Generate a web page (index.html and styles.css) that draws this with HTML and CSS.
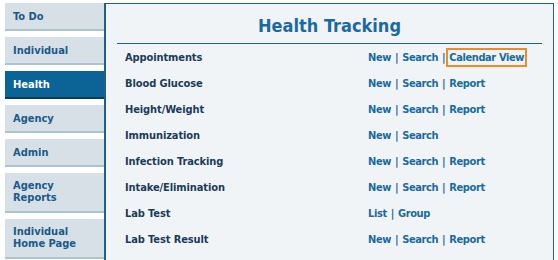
FILE: index.html
```html
<!DOCTYPE html>
<html>
<head>
<meta charset="utf-8">
<link rel="stylesheet" href="styles.css">
</head>
<body>
<div class="page">
  <nav class="sidebar">
    <a class="tab">To Do</a>
    <a class="tab">Individual</a>
    <a class="tab active">Health</a>
    <a class="tab">Agency</a>
    <a class="tab">Admin</a>
    <a class="tab two">Agency<br>Reports</a>
    <a class="tab two">Individual<br>Home Page</a>
  </nav>
  <main class="panel">
    <h1 class="title">Health Tracking</h1>
    <div class="rows">
      <div class="row"><span class="label">Appointments</span><span class="links"><a>New</a><i>|</i><a>Search</a><i>|</i><a class="hl">Calendar View</a></span></div>
      <div class="row"><span class="label">Blood Glucose</span><span class="links"><a>New</a><i>|</i><a>Search</a><i>|</i><a>Report</a></span></div>
      <div class="row"><span class="label">Height/Weight</span><span class="links"><a>New</a><i>|</i><a>Search</a><i>|</i><a>Report</a></span></div>
      <div class="row"><span class="label">Immunization</span><span class="links"><a>New</a><i>|</i><a>Search</a></span></div>
      <div class="row"><span class="label">Infection Tracking</span><span class="links"><a>New</a><i>|</i><a>Search</a><i>|</i><a>Report</a></span></div>
      <div class="row"><span class="label">Intake/Elimination</span><span class="links"><a>New</a><i>|</i><a>Search</a><i>|</i><a>Report</a></span></div>
      <div class="row"><span class="label">Lab Test</span><span class="links"><a>List</a><i>|</i><a>Group</a></span></div>
      <div class="row"><span class="label">Lab Test Result</span><span class="links"><a>New</a><i>|</i><a>Search</a><i>|</i><a>Report</a></span></div>
    </div>
  </main>
</div>
</body>
</html>
```
FILE: styles.css
```css
html, body {
  margin: 0;
  padding: 0;
  background: #ffffff;
}
body {
  font-family: "DejaVu Sans Condensed", "DejaVu Sans", Verdana, sans-serif;
  font-weight: bold;
  font-size: 11px;
  overflow: hidden;
  height: 260px;
}
.page {
  display: flex;
  padding: 3px 4px 0 5px;
  align-items: flex-start;
}
.sidebar {
  width: 99px;
  display: flex;
  flex-direction: column;
  gap: 6px;
  flex: none;
}
.tab {
  display: block;
  background: #d6e0e6;
  border-bottom: 2px solid #afc3cf;
  color: #1b5a8a;
  padding: 7px 0 6px 8px;
  line-height: 13px;
  height: 13px;
}
.tab.two {
  height: 24px;
  line-height: 12px;
  padding: 7px 0 7px 8px;
}
.tab.active {
  background: #0c6396;
  border-bottom-color: #0a3b5a;
  color: #ffffff;
}
.panel {
  flex: 1;
  background: #f1f4f6;
  border: 1px solid #1e5f8d;
  border-left-width: 2px;
  height: 280px;
}
.title {
  margin: 0 11px;
  height: 39px;
  border-bottom: 1px solid #1e5f8d;
  font-size: 18px;
  line-height: 44px;
  text-align: center;
  color: #1a69a2;
}
.rows {
  padding-left: 19px;
}
.row {
  display: grid;
  grid-template-columns: 243px auto;
  height: 26px;
  align-items: center;
}
.label {
  color: #1c3b5a;
  letter-spacing: -0.1px;
}
.links {
  color: #1a6aa0;
  display: flex;
  align-items: center;
  letter-spacing: -0.4px;
}
.links i {
  font-style: normal;
  color: #1a6aa0;
  margin: 0 4px;
}
.hl {
  border: 2px solid #f08a24;
  padding: 1px 1px 1px 1px;
  margin-left: -3px;
}
```
